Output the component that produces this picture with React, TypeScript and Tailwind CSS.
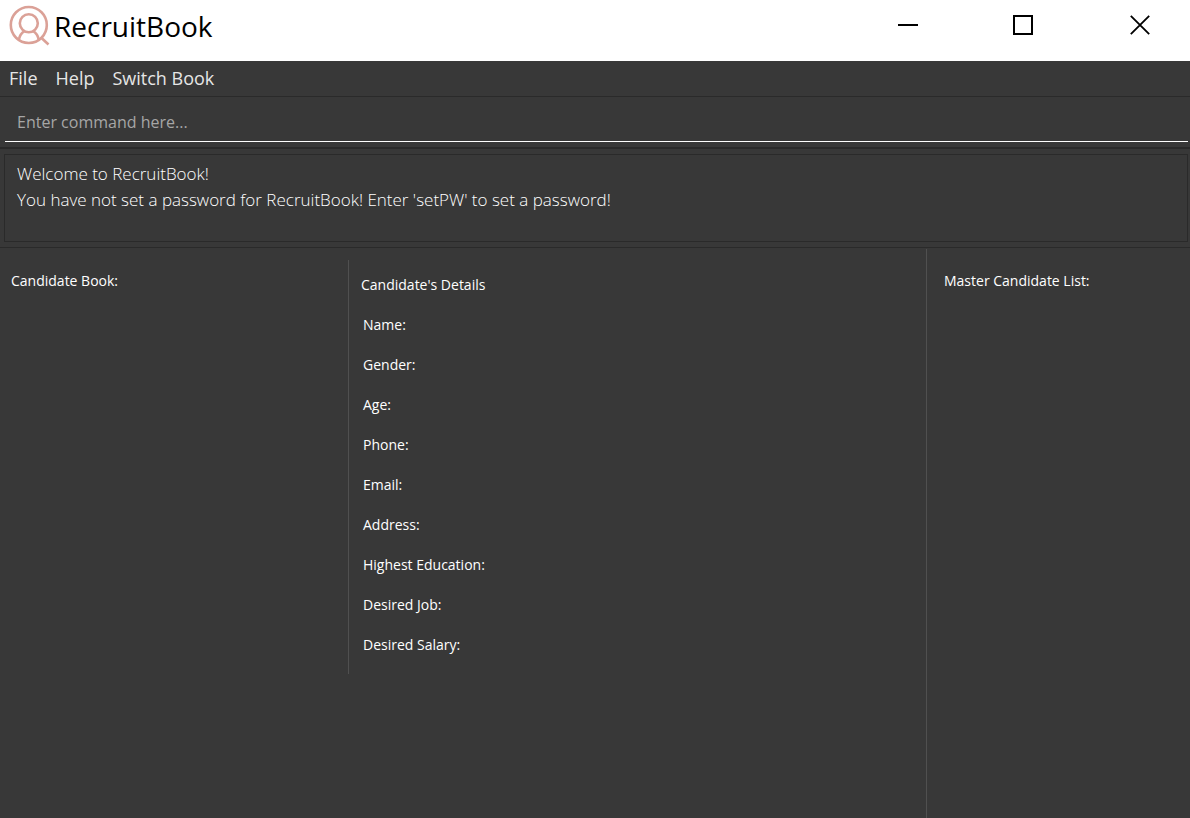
const menus = ['File', 'Help', 'Switch Book'];

const fields = [
  'Name:',
  'Gender:',
  'Age:',
  'Phone:',
  'Email:',
  'Address:',
  'Highest Education:',
  'Desired Job:',
  'Desired Salary:',
];

function Logo() {
  return (
    <svg viewBox="0 0 42 42" className="size-[42px]" fill="none" stroke="#dba197" strokeWidth="2.6" aria-hidden="true">
      <circle cx="19.8" cy="20" r="18" />
      <circle cx="19.8" cy="18.300" r="9" />
      <path d="M15.500 26.200c-2.500 1.500-4.800 4.300-5.600 8.300M24.100 26.200c2.500 1.500 4.800 4.300 5.600 8.300M32 32.500l7.500 7" />
    </svg>
  );
}

function TitleBar() {
  return (
    <header className="flex h-[61px] items-start justify-between bg-white text-black">
      <div className="flex items-center gap-[3px] pl-[9px] pt-[5px]">
        <Logo />
        <h1 className="text-[28px] leading-[42px]">RecruitBook</h1>
      </div>
      <div className="flex h-[50px]">
        <button type="button" aria-label="Minimize" className="flex w-[115px] items-center justify-center">
          <svg viewBox="0 0 20 20" className="size-5" stroke="currentColor" strokeWidth="2" shapeRendering="crispEdges">
            <path d="M0 10h20" />
          </svg>
        </button>
        <button type="button" aria-label="Maximize" className="flex w-[115px] items-center justify-center">
          <svg viewBox="0 0 20 20" className="size-5" fill="none" stroke="currentColor" strokeWidth="2" shapeRendering="crispEdges">
            <path d="M1 1h18v18H1z" />
          </svg>
        </button>
        <button type="button" aria-label="Close" className="flex w-[110px] items-center justify-center pl-[10px]">
          <svg viewBox="0 0 20 20" className="size-5" stroke="currentColor" strokeWidth="1.8">
            <path d="M.8.8l18.400 18.400M19.200.8L.8 19.200" />
          </svg>
        </button>
      </div>
    </header>
  );
}

export default function App() {
  return (
    <div className="flex min-h-screen flex-col bg-[#383838] font-['Open_Sans','Noto_Sans',sans-serif] text-white">
      <TitleBar />
      <nav className="flex h-9 items-center gap-[18px] border-b border-[#2a2a2a] px-[9px] pb-0.5 text-lg leading-8 text-[#e6e6e6]">
        {menus.map((m) => (
          <button key={m} type="button">
            {m}
          </button>
        ))}
      </nav>
      <div className="border-b-2 border-[#2a2a2a] pb-[5px] pl-[5px] pr-0.5 pt-[5px]">
        <input
          type="text"
          aria-label="Command"
          placeholder="Enter command here..."
          className="block h-10 w-full border-b border-white bg-transparent px-3 text-base outline-none placeholder:text-[#a6a6a6]"
        />
      </div>
      <div className="border-b border-[#2a2a2a] pb-[5px] pl-1 pr-0.5 pt-[5px]">
        <output className="block h-[88px] border border-[#2a2a2a] px-3 py-1.5 text-[17px] font-light leading-[26px]">
          <p>Welcome to RecruitBook!</p>
          <p>You have not set a password for RecruitBook! Enter 'setPW' to set a password!</p>
        </output>
      </div>
      <main className="grid grow grid-cols-[348fr_578fr_264fr] pt-px text-sm leading-5">
        <section className="px-[11px] pt-[22px]">
          <h2>Candidate Book:</h2>
        </section>
        <section className="mt-[11px] self-start border-l border-[#505050] pb-[9px] pl-3 pt-[15px]">
          <h2>Candidate's Details</h2>
          <dl className="pl-0.5 pt-[10px]">
            {fields.map((f) => (
              <div key={f} className="flex h-10 items-center">
                <dt>{f}</dt>
                <dd />
              </div>
            ))}
          </dl>
        </section>
        <section className="border-l border-[#505050] pl-[17px] pt-[22px]">
          <h2>Master Candidate List:</h2>
        </section>
      </main>
    </div>
  );
}
